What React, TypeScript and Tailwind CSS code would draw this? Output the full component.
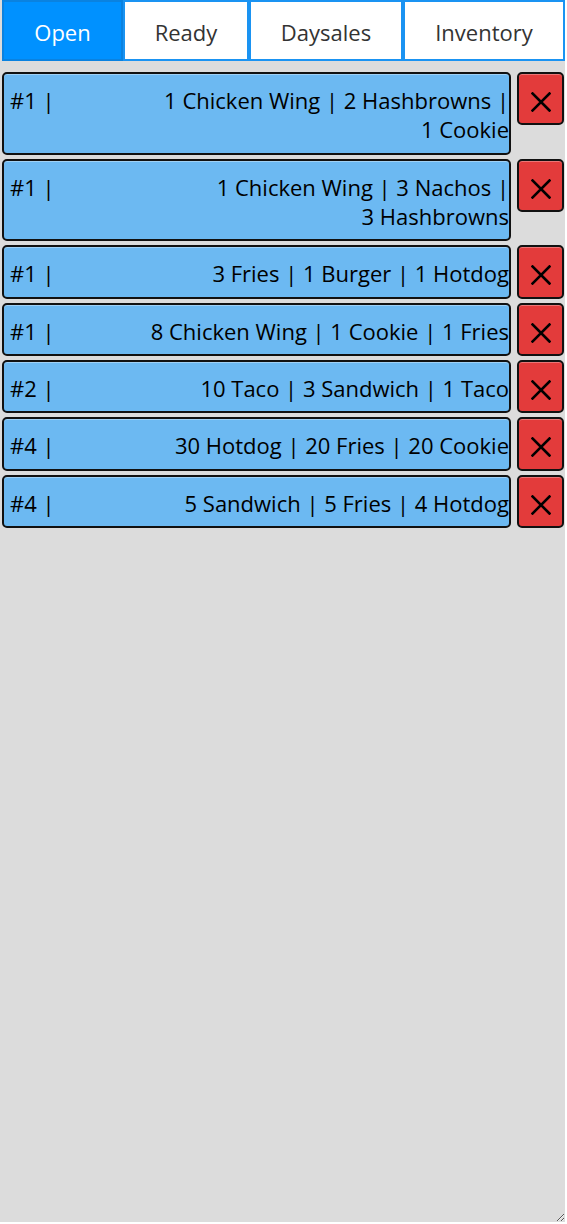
import React from 'react'

const TABS = [
  { label: 'Open', width: 'w-[121px]', active: true },
  { label: 'Ready', width: 'w-[126px]', active: false },
  { label: 'Daysales', width: 'w-[154px]', active: false },
  { label: 'Inventory', width: 'w-[162px]', active: false },
]

type Item = [number, string]

const ORDERS: { table: number; items: Item[] }[] = [
  { table: 1, items: [[1, 'Chicken Wing'], [2, 'Hashbrowns'], [1, 'Cookie']] },
  { table: 1, items: [[1, 'Chicken Wing'], [3, 'Nachos'], [3, 'Hashbrowns']] },
  { table: 1, items: [[3, 'Fries'], [1, 'Burger'], [1, 'Hotdog']] },
  { table: 1, items: [[8, 'Chicken Wing'], [1, 'Cookie'], [1, 'Fries']] },
  { table: 2, items: [[10, 'Taco'], [3, 'Sandwich'], [1, 'Taco']] },
  { table: 4, items: [[30, 'Hotdog'], [20, 'Fries'], [20, 'Cookie']] },
  { table: 4, items: [[5, 'Sandwich'], [5, 'Fries'], [4, 'Hotdog']] },
]

function CloseGlyph() {
  return (
    <svg width="20" height="20" viewBox="0 0 20 20" className="mt-[7px]">
      <path d="M1.5 1.5 L18.5 18.5 M18.5 1.5 L1.5 18.5" stroke="#000" strokeWidth="2.6" strokeLinecap="square" fill="none" />
    </svg>
  )
}

function OrderRow({ table, items }: { table: number; items: Item[] }) {
  // keep qty and name together so lines break only between items
  const text = items.map(([qty, name]) => `${qty}\u00a0${name}`).join(' | ')
  return (
    <div className="flex items-start gap-[6px]">
      <div className="flex-1 flex justify-between items-start rounded-[5px] border-2 border-[#111] bg-[#6cb9f2] shadow-[inset_0_1px_0_rgba(255,255,255,0.35)] pl-[6px] pt-[12px] pb-[8px] text-black">
        <span className="whitespace-nowrap">#{table} |</span>
        <span className="w-[400px] text-right">{text}</span>
      </div>
      <button className="w-[47px] h-[53.33px] flex items-center justify-center rounded-[5px] border-2 border-[#111] bg-[#e33b3b] shadow-[inset_0_1px_0_rgba(255,255,255,0.3)]">
        <CloseGlyph />
      </button>
    </div>
  )
}

export default function App() {
  return (
    <div
      className="w-[565px] h-[1222px] bg-[#dcdcdc] overflow-auto resize text-[22px] leading-[29.33px]"
      style={{ fontFamily: '"Open Sans", "Noto Sans", sans-serif' }}
    >
      <div className="flex pl-[2px] h-[61px]">
        {TABS.map((t) => (
          <button
            key={t.label}
            className={
              t.active
                ? `${t.width} h-full pt-[5px] border-2 border-[#0a82e0] bg-[#0091ff] text-white`
                : `${t.width} h-full pt-[5px] border-2 border-[#1a93f2] bg-white text-[#333]`
            }
          >
            {t.label}
          </button>
        ))}
      </div>
      <div className="flex flex-col gap-[4px] pt-[11px] pl-[2px] pr-[1px]">
        {ORDERS.map((o, i) => (
          <OrderRow key={i} table={o.table} items={o.items} />
        ))}
      </div>
    </div>
  )
}
